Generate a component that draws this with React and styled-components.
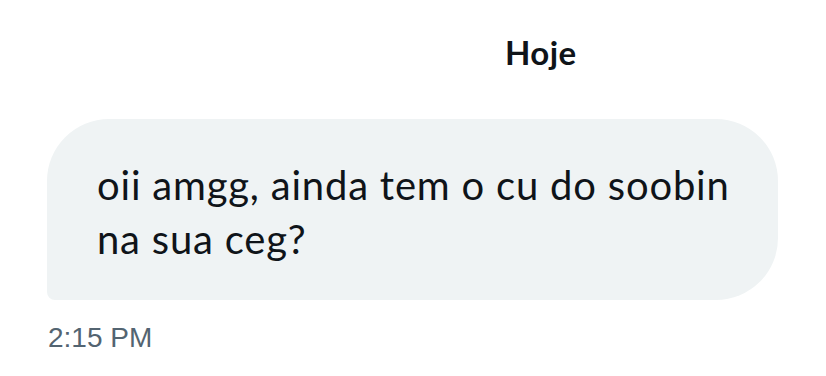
import React from 'react';
import styled, { createGlobalStyle } from 'styled-components';

const GlobalStyle = createGlobalStyle`
    html, body {
        margin: 0;
        padding: 0;
        background: #ffffff;
    }
    body {
        font-family: Lato, "Noto Sans", sans-serif;
        color: #0f1419;
    }
`;

const Thread = styled.div`
    width: 826px;
    height: 376px;
    box-sizing: border-box;
    padding: 30px 48px 0 47px;
    display: flex;
    flex-direction: column;
`;

const DayLabel = styled.div`
    align-self: flex-start;
    margin-left: 458px;
    font-family: Lato, "Liberation Sans", sans-serif;
    font-weight: 700;
    font-size: 33px;
    line-height: 44px;
    letter-spacing: 0.4px;
    color: #0f1419;
`;

const Bubble = styled.div`
    margin-top: 45px;
    width: 731px;
    box-sizing: border-box;
    padding: 39px 30px 34px 50px;
    background: #eff3f4;
    border-radius: 62px 62px 62px 8px;
    font-size: 40px;
    line-height: 54px;
    letter-spacing: 0.8px;
    color: #0f1419;
`;

const Time = styled.div`
    margin-top: 20px;
    margin-left: 1px;
    font-family: "Liberation Sans", Arial, sans-serif;
    font-size: 28px;
    line-height: 36px;
    color: #536471;
`;

const App = () => {
    return (
        <>
            <GlobalStyle />
            <Thread>
                <DayLabel>Hoje</DayLabel>
                <Bubble>oii amgg, ainda tem o cu do soobin na sua ceg?</Bubble>
                <Time>2:15 PM</Time>
            </Thread>
        </>
    );
};

export default App;
